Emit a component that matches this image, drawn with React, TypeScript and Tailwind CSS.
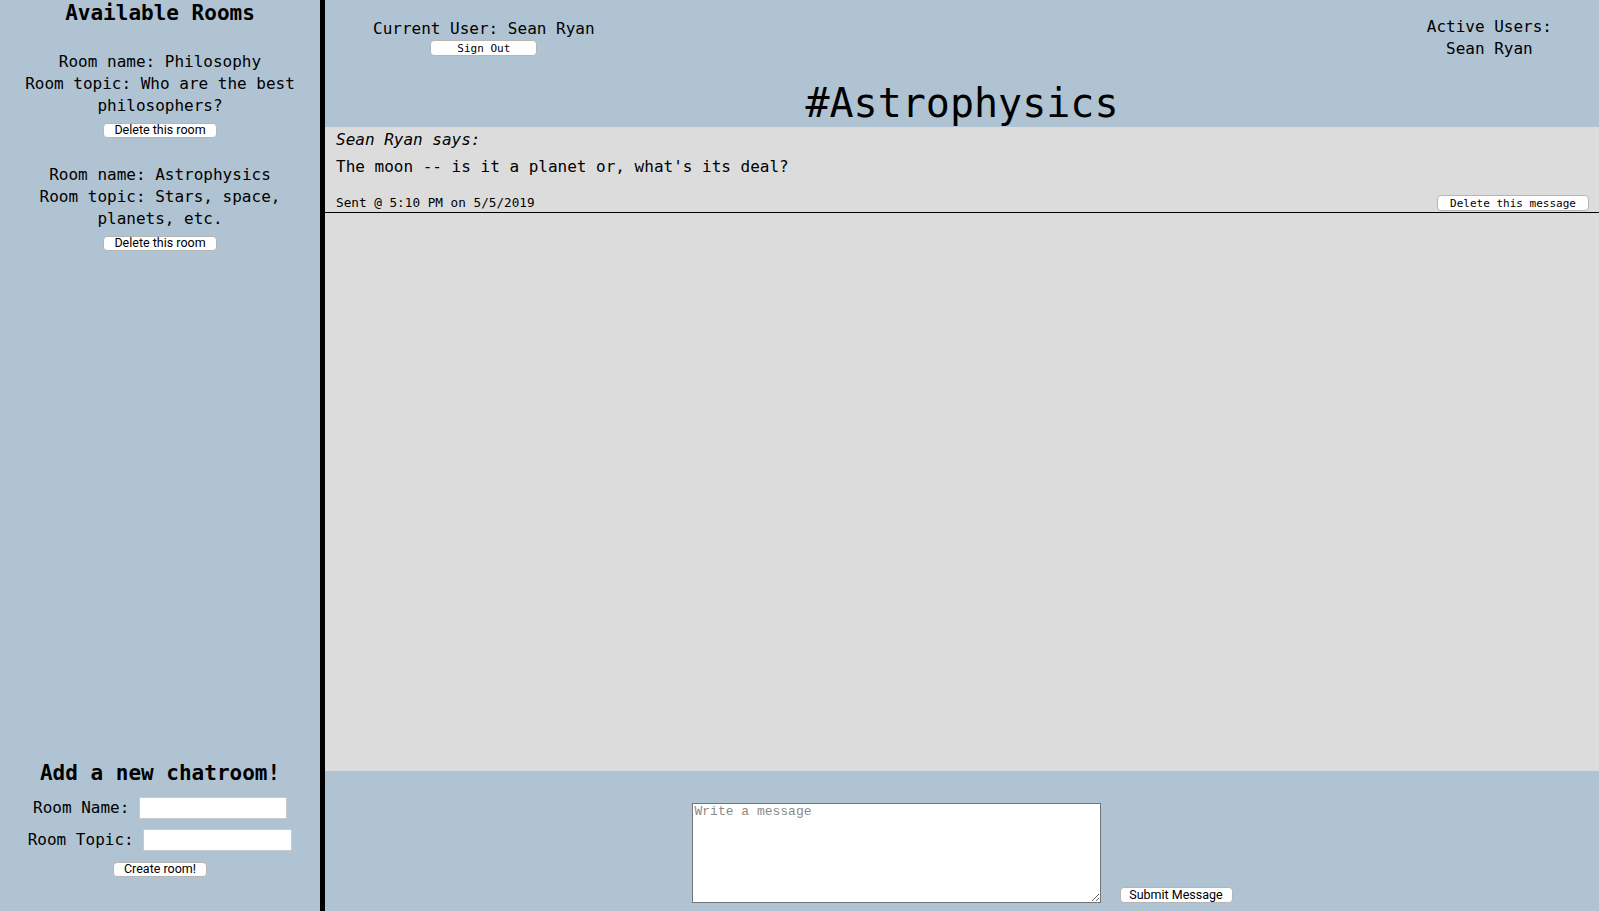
import React from "react"

interface Room {
  name: string
  topic: string
}

const rooms: Room[] = [
  { name: "Philosophy", topic: "Who are the best philosophers?" },
  { name: "Astrophysics", topic: "Stars, space, planets, etc." },
]

const mono = "font-['DejaVu_Sans_Mono','Liberation_Mono',monospace]"
const sansBtn =
  "font-['Roboto','Liberation_Sans',sans-serif] text-[12.5px] leading-none bg-white border border-[#b5b5b5] rounded-[4px] text-black"
const monoBtn =
  "font-['DejaVu_Sans_Mono','Liberation_Mono',monospace] text-[11px] leading-none bg-white border border-[#b5b5b5] rounded-[4px] text-black"

function Sidebar() {
  return (
    <aside className="flex h-full w-[325px] shrink-0 flex-col justify-between border-r-[5px] border-black bg-[#afc3d2] text-center">
      <div>
        <h2 className="pt-[1px] text-[21px] font-bold leading-[25px]">Available Rooms</h2>
        <div className="mt-[25px] flex flex-col gap-[26px] px-[20px]">
          {rooms.map((room) => (
            <div key={room.name} className="flex flex-col items-center">
              <p className="text-[16px] leading-[22px]">{`Room name: ${room.name}`}</p>
              <p className="text-[16px] leading-[22px]">{`Room topic: ${room.topic}`}</p>
              <button className={`${sansBtn} mt-[6px] h-[15px] w-[114px]`}>Delete this room</button>
            </div>
          ))}
        </div>
      </div>
      <div className="flex flex-col items-center pb-[34px]">
        <h2 className="text-[21px] font-bold leading-[25px]">Add a new chatroom!</h2>
        <label className="mt-[11px] flex items-center text-[16px] leading-[22px] whitespace-pre">
          {"Room Name: "}
          <input className="h-[22px] w-[148px] border border-[#c9c9c9] bg-white" />
        </label>
        <label className="mt-[10px] flex items-center text-[16px] leading-[22px] whitespace-pre">
          {"Room Topic: "}
          <input className="h-[22px] w-[149px] border border-[#c9c9c9] bg-white" />
        </label>
        <button className={`${sansBtn} mt-[11px] h-[15px] w-[94px]`}>Create room!</button>
      </div>
    </aside>
  )
}

function Header() {
  return (
    <header className="flex h-[127px] shrink-0 flex-col bg-[#afc3d2]">
      <div className="flex h-[79px] justify-between pl-[48px] pr-[47px]">
        <div className="flex flex-col items-center pt-[18px]">
          <p className="text-[16px] leading-[21px]">Current User: Sean Ryan</p>
          <button className={`${monoBtn} mt-[1px] h-[16px] w-[107px]`}>Sign Out</button>
        </div>
        <div className="flex flex-col items-center pt-[16px] text-[16px] leading-[22px]">
          <p>Active Users:</p>
          <p>Sean Ryan</p>
        </div>
      </div>
      <h1 className="text-center text-[40px] leading-[48px]">#Astrophysics</h1>
    </header>
  )
}

function Message() {
  return (
    <div className="border-b border-black pb-[1px] pl-[11px] pr-[10px] pt-[2px]">
      <p className="text-[16px] italic leading-[22px]">Sean Ryan says:</p>
      <p className="mt-[5px] text-[16px] leading-[22px]">The moon -- is it a planet or, what's its deal?</p>
      <div className="mt-[17px] flex h-[16px] items-center justify-between">
        <span className="text-[12.7px] leading-none">Sent @ 5:10 PM on 5/5/2019</span>
        <button className={`${monoBtn} h-[16px] w-[152px]`}>Delete this message</button>
      </div>
    </div>
  )
}

export default function App() {
  return (
    <div className={`flex h-[911px] w-full overflow-hidden text-black ${mono}`}>
      <Sidebar />
      <main className="flex min-w-0 flex-1 flex-col">
        <Header />
        <section className="flex-1 bg-[#dcdcdc]">
          <Message />
        </section>
        <footer className="flex h-[140px] shrink-0 items-end justify-center gap-[19px] bg-[#afc3d2] pb-[8px]">
          <textarea
            placeholder="Write a message"
            className="h-[100px] w-[409px] border border-[#767676] bg-white px-[2px] py-0 font-['Liberation_Mono',monospace] text-[13px] leading-[15px] placeholder:text-[#8a8a8a]"
          />
          <button className={`${sansBtn} h-[16px] w-[113px]`}>Submit Message</button>
        </footer>
      </main>
    </div>
  )
}
